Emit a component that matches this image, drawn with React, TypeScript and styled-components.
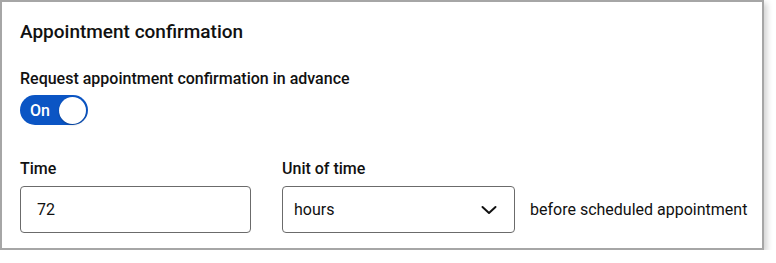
import { FunctionComponent } from 'react';
import styled, { createGlobalStyle } from 'styled-components';

const GlobalStyle = createGlobalStyle`
  body {
    margin: 0;
    background: #ffffff;
    font-family: Roboto, 'Liberation Sans', sans-serif;
    color: #1a1a1a;
  }
`;

const Card = styled.section`
  box-sizing: border-box;
  width: 764px;
  height: 250px;
  border: 2px solid #a6a6a6;
  background: #ffffff;
  box-shadow: 3px 3px 6px rgba(0, 0, 0, 0.18);
  padding: 16px 18px 0;
`;

const Title = styled.h2`
  margin: 0;
  font-size: 19px;
  line-height: 28px;
  font-weight: 500;
  color: #111;
`;

const FieldLabel = styled.div`
  font-size: 16px;
  line-height: 24px;
  font-weight: 500;
  color: #111;
`;

const ToggleSection = styled.div`
  margin-top: 21px;
  display: flex;
  flex-direction: column;
  align-items: flex-start;
  gap: 4px;
`;

const Toggle = styled.button<{ on: boolean }>`
  box-sizing: border-box;
  width: 68px;
  height: 30px;
  border: none;
  border-radius: 15px;
  padding: 0 2px 0 10px;
  background: ${({ on }) => (on ? '#0b55c4' : '#8a8a8a')};
  display: flex;
  align-items: center;
  justify-content: space-between;
  font-family: inherit;
  font-size: 16px;
  font-weight: 500;
  color: #ffffff;
  cursor: pointer;
`;

const Knob = styled.span`
  width: 27px;
  height: 27px;
  border-radius: 50%;
  background: #ffffff;
  box-shadow: 0 1px 2px rgba(0, 0, 0, 0.25);
`;

const Row = styled.div`
  margin-top: 32px;
  display: flex;
  align-items: flex-end;
  gap: 31px;
`;

const Field = styled.div`
  display: flex;
  flex-direction: column;
  gap: 5px;
`;

const Box = styled.div<{ width: number }>`
  box-sizing: border-box;
  width: ${({ width }) => width}px;
  height: 47px;
  border: 1px solid #6b6b6b;
  border-radius: 4px;
  display: flex;
  align-items: center;
  justify-content: space-between;
  font-size: 16px;
  color: #111;
`;

const InputBox = styled(Box)`
  padding-left: 16px;
`;

const SelectBox = styled(Box)`
  padding: 0 17px 0 11px;
`;

const Suffix = styled.span`
  margin-left: -16px;
  height: 47px;
  display: flex;
  align-items: center;
  white-space: nowrap;
  font-size: 16px;
  color: #111;
`;

const Chevron = () => (
  <svg width="16" height="10" viewBox="0 0 16 10" fill="none">
    <path d="M1.5 2L8 8L14.5 2" stroke="#111" strokeWidth="2" strokeLinecap="round" strokeLinejoin="round" />
  </svg>
);

const App: FunctionComponent = () => {
  return (
    <>
      <GlobalStyle />
      <Card>
        <Title>Appointment confirmation</Title>
        <ToggleSection>
          <FieldLabel>Request appointment confirmation in advance</FieldLabel>
          <Toggle on>
            On
            <Knob />
          </Toggle>
        </ToggleSection>
        <Row>
          <Field>
            <FieldLabel>Time</FieldLabel>
            <InputBox width={231}>72</InputBox>
          </Field>
          <Field>
            <FieldLabel>Unit of time</FieldLabel>
            <SelectBox width={233}>
              hours
              <Chevron />
            </SelectBox>
          </Field>
          <Suffix>before scheduled appointment</Suffix>
        </Row>
      </Card>
    </>
  );
};

export default App;
